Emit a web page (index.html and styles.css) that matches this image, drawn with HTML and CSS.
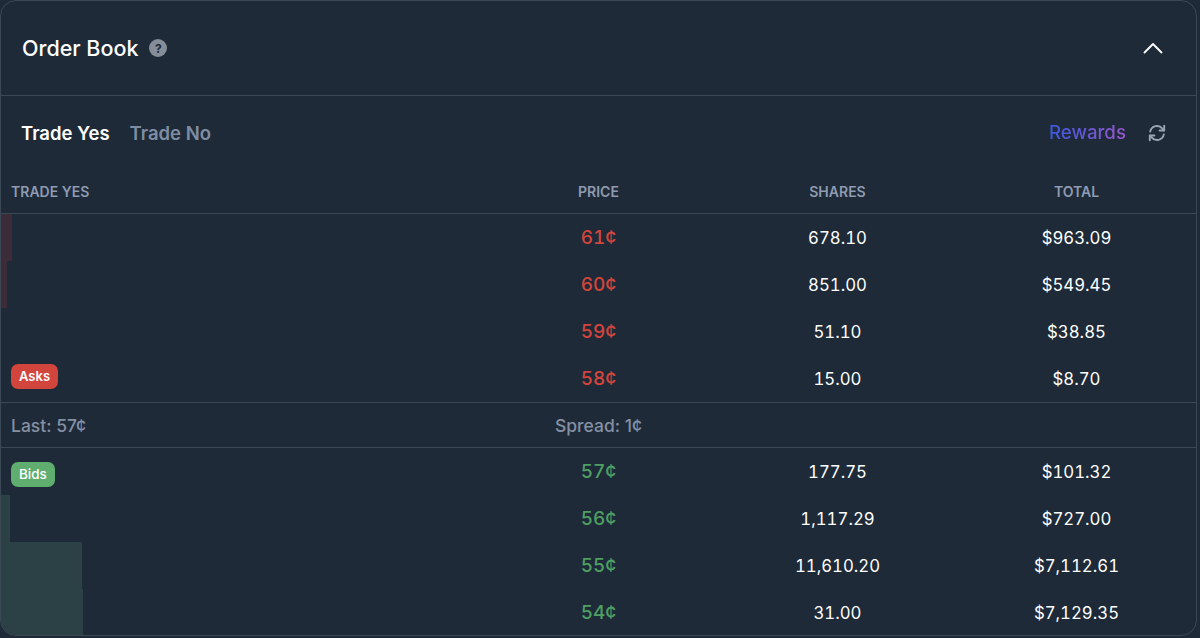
FILE: index.html
```html
<!DOCTYPE html>
<html lang="en">
<head>
    <meta charset="UTF-8">
    <title>Order Book</title>
    <link rel="stylesheet" href="styles.css">
</head>
<body>
    <div class="card">
        <div class="card-header">
            <div class="title">
                <h2>Order Book</h2>
                <span class="help">?</span>
            </div>
            <svg class="chevron" width="20" height="12" viewBox="0 0 20 12" fill="none" stroke="#fff" stroke-width="1.8" stroke-linecap="round" stroke-linejoin="round"><path d="M1.5 10.5 10 2l8.5 8.5"/></svg>
        </div>
        <div class="tabs">
            <span class="tab active">Trade Yes</span>
            <span class="tab">Trade No</span>
            <span class="rewards">Rewards</span>
            <svg class="refresh" width="18" height="18" viewBox="0 0 18 18" fill="none" stroke="#9aa5b4" stroke-width="1.9" stroke-linecap="round" stroke-linejoin="round"><path d="M2.2 7.6A6.9 6.9 0 0 1 14.4 4.6L16 6.4"/><path d="M16.2 1.8v4.7h-4.6"/><path d="M15.8 10.4A6.9 6.9 0 0 1 3.6 13.4L2 11.6"/><path d="M1.8 16.2v-4.7h4.6"/></svg>
        </div>
        <div class="row head">
            <div>TRADE YES</div>
            <div class="cell">PRICE</div>
            <div class="cell">SHARES</div>
            <div class="cell">TOTAL</div>
        </div>
        <div class="row">
            <div class="bar ask" style="width: 11px"></div>
            <div></div>
            <div class="cell price red">61¢</div>
            <div class="cell">678.10</div>
            <div class="cell">$963.09</div>
        </div>
        <div class="row">
            <div class="bar ask" style="width: 6px"></div>
            <div></div>
            <div class="cell price red">60¢</div>
            <div class="cell">851.00</div>
            <div class="cell">$549.45</div>
        </div>
        <div class="row">
            <div></div>
            <div class="cell price red">59¢</div>
            <div class="cell">51.10</div>
            <div class="cell">$38.85</div>
        </div>
        <div class="row">
            <div><span class="badge badge-red">Asks</span></div>
            <div class="cell price red">58¢</div>
            <div class="cell">15.00</div>
            <div class="cell">$8.70</div>
        </div>
        <div class="row summary">
            <div>Last: 57¢</div>
            <div class="cell">Spread: 1¢</div>
            <div></div>
            <div></div>
        </div>
        <div class="row">
            <div><span class="badge badge-green">Bids</span></div>
            <div class="cell price green">57¢</div>
            <div class="cell">177.75</div>
            <div class="cell">$101.32</div>
        </div>
        <div class="row">
            <div class="bar bid" style="width: 9px"></div>
            <div></div>
            <div class="cell price green">56¢</div>
            <div class="cell">1,117.29</div>
            <div class="cell">$727.00</div>
        </div>
        <div class="row">
            <div class="bar bid" style="width: 81px"></div>
            <div></div>
            <div class="cell price green">55¢</div>
            <div class="cell">11,610.20</div>
            <div class="cell">$7,112.61</div>
        </div>
        <div class="row">
            <div class="bar bid" style="width: 82px"></div>
            <div></div>
            <div class="cell price green">54¢</div>
            <div class="cell">31.00</div>
            <div class="cell">$7,129.35</div>
        </div>
    </div>
</body>
</html>
```

FILE: styles.css
```css
body {
    margin: 0;
    background: #1e2a38;
    font-family: 'Inter', 'Liberation Sans', sans-serif;
    color: #fff;
}

.card {
    width: 1197px;
    height: 636px;
    box-sizing: border-box;
    border: 1px solid #3a4856;
    border-radius: 16px;
    overflow: hidden;
}

.card-header {
    height: 94px;
    padding: 0 33px 0 21px;
    display: flex;
    align-items: center;
    justify-content: space-between;
    border-bottom: 1px solid #3a4856;
}

.title {
    display: flex;
    align-items: center;
    gap: 11px;
}

h2 {
    margin: 0;
    font-size: 21.5px;
    font-weight: 500;
}

.help {
    width: 18px;
    height: 18px;
    border-radius: 50%;
    background: #858d99;
    color: #1e2a38;
    font-size: 12px;
    font-weight: 700;
    display: flex;
    align-items: center;
    justify-content: center;
}

.tabs {
    height: 73px;
    padding: 0 30px 0 20px;
    display: flex;
    align-items: center;
    gap: 20px;
    font-size: 18.5px;
    font-weight: 600;
}

.tab {
    color: #7f8da3;
}

.tab.active {
    color: #fff;
}

.rewards {
    margin-left: auto;
    font-size: 18.7px;
    font-weight: 500;
    background: linear-gradient(90deg, #3a58dc, #9a58d0);
    -webkit-background-clip: text;
    background-clip: text;
    color: transparent;
}

.refresh {
    margin-left: 2px;
}

.row {
    position: relative;
    display: grid;
    grid-template-columns: 468px 239px 239px 239px;
    align-items: center;
    height: 47px;
    padding-left: 10px;
    font-size: 16.8px;
    font-feature-settings: "tnum";
}

.row > div {
    position: relative;
}

.row .bar {
    position: absolute;
    left: 0;
    top: 0;
    bottom: 0;
}

.bar.ask {
    background: #3b2c38;
}

.bar.bid {
    background: #2c4145;
}

.cell {
    text-align: center;
}

.head {
    height: 45px;
    border-bottom: 1px solid #3a4856;
    box-sizing: border-box;
    color: #8f9bb0;
    font-size: 14px;
    font-weight: 600;
    font-feature-settings: normal;
}

.summary {
    height: 44px;
    border-top: 1px solid #3a4856;
    border-bottom: 1px solid #3a4856;
    color: #8490a3;
    font-size: 17.5px;
    font-weight: 500;
    font-feature-settings: normal;
}

.price {
    font-weight: 500;
    font-size: 19px;
}

.red {
    color: #d2453c;
}

.green {
    color: #4f9e63;
}

.badge {
    display: block;
    width: fit-content;
    padding: 0 8px;
    height: 25px;
    line-height: 25px;
    border-radius: 7px;
    font-size: 13px;
    font-weight: 600;
    color: #fff;
}

.badge-red {
    margin-bottom: 4px;
    background: #d2453c;
}

.badge-green {
    margin-top: 5px;
    background: #5fae6f;
    font-size: 13.5px;
    font-weight: 500;
}
```
